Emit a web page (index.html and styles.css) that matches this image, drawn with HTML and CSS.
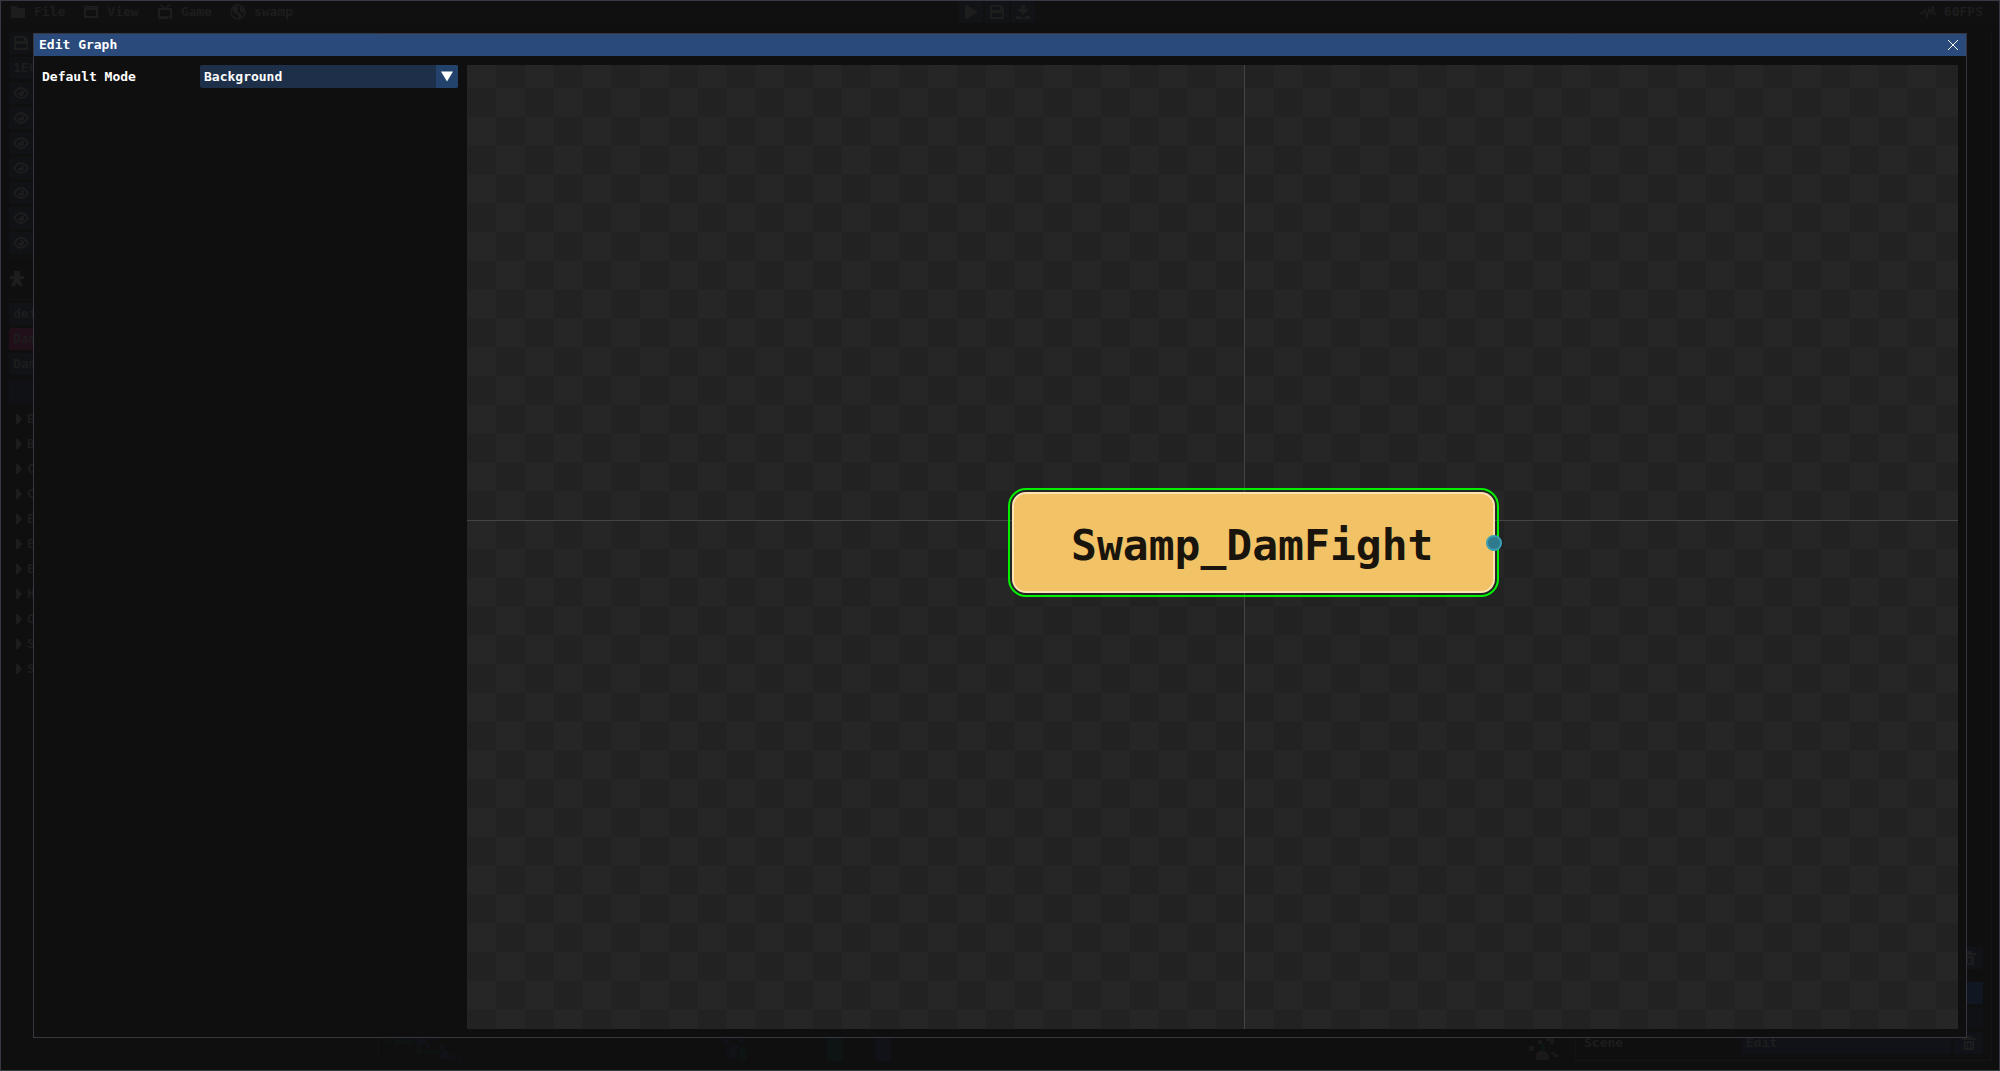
FILE: index.html
```html
<!DOCTYPE html>
<html lang="en">
<head>
    <meta charset="UTF-8">
    <meta name="viewport" content="width=device-width, initial-scale=1.0">
    <title>Edit Graph</title>
    <link rel="stylesheet" href="styles.css">
</head>
<body>
    <!-- Shared icons -->
    <svg class="sprite" aria-hidden="true">
        <symbol id="eye" viewBox="0 0 16 16">
            <path d="M1 8Q8-2 15 8Q8 18 1 8Z" fill="none" stroke="currentColor" stroke-width="2"/>
            <path d="M8 5v3H5a3 3 0 1 0 3-3z"/>
        </symbol>
        <symbol id="save" viewBox="0 0 16 16">
            <path d="M1 1h11l3 3v11H1zM3 3v3h8V3zM3 9v4h10V9z" fill-rule="evenodd"/>
        </symbol>
        <symbol id="trash" viewBox="0 0 16 16">
            <path d="M5 1h6v2h4v2H1V3h4zM3 6h10v9H3zM5 8v5h1V8zM7 8v5h2V8zM10 8v5h1V8z" fill-rule="evenodd"/>
        </symbol>
        <symbol id="arrow" viewBox="0 0 8 10">
            <path d="M1 0h2l4 5-4 5H1z"/>
        </symbol>
    </svg>

    <!-- Editor behind the modal -->
    <div class="editor" inert>
        <header class="menu-bar">
            <nav class="menus">
                <button class="menu">
                    <svg class="icon" viewBox="0 0 16 16"><path d="M1 2h5l2 2h7v10H1z"/></svg>File
                </button>
                <button class="menu">
                    <svg class="icon" viewBox="0 0 16 16"><path d="M1 2h14v12H1zM3 6v6h10V6zM3 3v1h1V3zM6 3v1h1V3z" fill-rule="evenodd"/></svg>View
                </button>
                <button class="menu">
                    <svg class="icon" viewBox="0 0 16 16"><path d="M4 0l4 4 4-4 1 1-3 3h5v11H1V4h5L3 1zM3 6v6h10V6zM11 13v1h2v-1z" fill-rule="evenodd"/></svg>Game
                </button>
                <button class="menu">
                    <svg class="icon" viewBox="0 0 16 16"><circle cx="8" cy="8" r="7" fill="none" stroke="currentColor" stroke-width="1.5"/><path d="M2 5l4-3 3 2-2 3 3 2 2 4-3 1-2-4-3-1zM10 2l4 4-1 4-3-3z"/></svg>swamp
                </button>
            </nav>
            <div class="tools">
                <button class="tool" aria-label="Play"><svg class="icon" viewBox="0 0 16 16"><path d="M2 0l13 8-13 8z"/></svg></button>
                <button class="tool" aria-label="Save"><svg class="icon"><use href="#save"/></svg></button>
                <button class="tool" aria-label="Download"><svg class="icon" viewBox="0 0 16 16"><path d="M6 1h4v4h4l-6 6-6-6h4zM1 12h4l3 2 3-2h4v3H1z"/></svg></button>
            </div>
            <div class="fps">
                <svg class="icon" viewBox="0 0 16 16"><path d="M0 9h3l2-3 2 7 2-8 2 4 2-7 1 8h2" fill="none" stroke="currentColor" stroke-width="1.5"/></svg>60FPS
            </div>
        </header>

        <div class="workspace">
            <aside class="outliner">
                <div class="row"><svg class="icon"><use href="#save"/></svg></div>
                <div class="row">1E0</div>
                <div class="row"><svg class="icon"><use href="#eye"/></svg></div>
                <div class="row"><svg class="icon"><use href="#eye"/></svg></div>
                <div class="row"><svg class="icon"><use href="#eye"/></svg></div>
                <div class="row"><svg class="icon"><use href="#eye"/></svg></div>
                <div class="row"><svg class="icon"><use href="#eye"/></svg></div>
                <div class="row"><svg class="icon"><use href="#eye"/></svg></div>
                <div class="row"><svg class="icon"><use href="#eye"/></svg></div>
                <div class="actor">
                    <svg class="icon" viewBox="0 0 16 16"><path d="M5 0h6v5h4v3h-4l1 3 2 3-3 2-3-4-3 4-3-2 2-3 1-3H1V5h4z"/></svg>
                </div>
                <div class="row">def</div>
                <div class="row selected">Dam</div>
                <div class="row">Dam</div>
                <div class="row empty"></div>
                <ul class="tree">
                    <li><svg class="arrow"><use href="#arrow"/></svg>B</li>
                    <li><svg class="arrow"><use href="#arrow"/></svg>B</li>
                    <li><svg class="arrow"><use href="#arrow"/></svg>C</li>
                    <li><svg class="arrow"><use href="#arrow"/></svg>C</li>
                    <li><svg class="arrow"><use href="#arrow"/></svg>E</li>
                    <li><svg class="arrow"><use href="#arrow"/></svg>E</li>
                    <li><svg class="arrow"><use href="#arrow"/></svg>E</li>
                    <li><svg class="arrow"><use href="#arrow"/></svg>H</li>
                    <li><svg class="arrow"><use href="#arrow"/></svg>O</li>
                    <li><svg class="arrow"><use href="#arrow"/></svg>S</li>
                    <li><svg class="arrow"><use href="#arrow"/></svg>S</li>
                </ul>
            </aside>

            <!-- Bottom edge of the map view -->
            <div class="map">
                <svg class="map-strip" viewBox="0 0 1200 26" preserveAspectRatio="none" aria-hidden="true">
                    <g fill="#0e1413">
                        <path d="M9 4h3v5H9zM15 4h20v5H15zM38 14h5v5h-5zM46 15h14v4H46zM361 12h8v13h-8zM449 0h17v26h-17z"/>
                    </g>
                    <g fill="#101217">
                        <path d="M36 0h7v4h5v5h4v4h-5V9h-5v5h-4V8h-2zM48 0h8v6h-4V3h-4zM60 10h5v4h-5zM62 16h8v4h6v4H60v-4h2zM80 22h4v3h-4zM346 4h4v5h-4zM354 0h5v4h-5zM352 10h8v13h-8v-5h-5v-4h5zM361 4h5v4h-5zM498 0h16v26h-16z"/>
                    </g>
                    <g fill="#191918">
                        <path d="M1163 5h4v4h-4zM1171 2h8v7h-4V6h-4zM1154 11h5v5h-5zM1176 17h4v2h3v3h-5v-3h-2zM1163 16h7l4 4v5h-13v-7h2z"/>
                    </g>
                    <path d="M1166 9h4v7h-4z" fill="#0e1615"/>
                </svg>
            </div>

            <aside class="inspector">
                <div class="field end">
                    <button class="delete" aria-label="Delete"><svg class="icon"><use href="#trash"/></svg></button>
                </div>
                <div class="active-row"></div>
                <div class="row empty"></div>
                <div class="field">
                    <label for="scene">Scene</label>
                    <input id="scene" type="text" value="Edit">
                    <button class="delete" aria-label="Delete scene"><svg class="icon"><use href="#trash"/></svg></button>
                </div>
            </aside>
        </div>
    </div>

    <!-- Modal -->
    <div class="modal" role="dialog" aria-labelledby="modal-title">
        <div class="title-bar">
            <h1 id="modal-title">Edit Graph</h1>
            <button class="close" aria-label="Close">
                <svg viewBox="0 0 12 12"><path d="M1 1l10 10M11 1L1 11" stroke="currentColor"/></svg>
            </button>
        </div>
        <div class="modal-body">
            <form class="settings">
                <label for="mode">Default Mode</label>
                <div class="select">
                    <select id="mode">
                        <option>Background</option>
                    </select>
                    <svg class="select-arrow" viewBox="0 0 22 22" aria-hidden="true"><path d="M5 6h12l-6 10z"/></svg>
                </div>
            </form>
            <div class="graph">
                <!-- Checkerboard and axes, zoomed to 90% around the origin -->
                <svg class="grid" aria-hidden="true">
                    <defs>
                        <pattern id="checker" width="64" height="64" patternUnits="userSpaceOnUse" patternTransform="translate(778 455) scale(0.9)">
                            <path d="M0 0h64v64H0z" fill="#222"/>
                            <path d="M32 0h32v32H32zM0 32h32v32H0z" fill="#262626"/>
                        </pattern>
                    </defs>
                    <rect width="100%" height="100%" fill="url(#checker)"/>
                    <rect x="777" width="1" height="100%" fill="#444"/>
                    <rect y="455" width="100%" height="1" fill="#444"/>
                </svg>
                <div class="node">
                    Swamp_DamFight
                    <span class="port"></span>
                </div>
            </div>
        </div>
    </div>
</body>
</html>
```

FILE: styles.css
```css
* {
    margin: 0;
    padding: 0;
    box-sizing: border-box;
}

body {
    font: bold 13px/22px 'DejaVu Sans Mono', monospace;
    background: #0f0f0f;
    color: #fff;
    height: 100vh;
    overflow: hidden;
}

button,
input,
select {
    font: inherit;
    color: inherit;
    border: none;
    background: none;
}

ul {
    list-style: none;
}

.sprite {
    display: none;
}

.icon {
    width: 16px;
    height: 16px;
    fill: currentColor;
    flex: none;
}

/* Editor (dimmed) */
.editor {
    height: 100%;
    display: flex;
    flex-direction: column;
    border: 1px solid #393943;
    color: #1d1d1d;
}

.menu-bar {
    display: grid;
    grid-template-columns: 1fr auto 1fr;
    height: 22px;
    padding: 0 16px 0 9px;
    background: #101010;
}

.menus {
    display: flex;
    gap: 18px;
}

.menu,
.fps {
    display: flex;
    align-items: center;
    gap: 8px;
}

.fps {
    justify-content: flex-end;
}

.tools {
    display: flex;
    gap: 2px;
}

.tool {
    display: flex;
    align-items: center;
    justify-content: center;
    width: 24px;
    background: #111317;
}

.workspace {
    flex: 1;
    display: flex;
    min-height: 0;
    padding: 9px 7px 9px 8px;
}

/* Left panel */
.outliner {
    width: 369px;
    display: flex;
    flex-direction: column;
    gap: 3px;
}

.row {
    display: flex;
    align-items: center;
    height: 22px;
    padding: 0 4px;
    background: #101216;
    border-radius: 2px;
}

.row.selected {
    background: #210f19;
}

.row.empty {
    background: #101114;
}

.actor {
    display: flex;
    align-items: center;
    height: 43px;
    border-top: 1px solid #121212;
    border-bottom: 1px solid #121212;
}

.outliner .row.empty {
    margin-top: 3px;
}

.tree {
    padding-left: 6px;
}

.tree li {
    display: flex;
    align-items: center;
    gap: 4px;
    height: 25px;
}

.arrow {
    width: 8px;
    height: 10px;
    fill: currentColor;
}

/* Map */
.map {
    flex: 1;
    display: flex;
    align-items: flex-end;
    border-left: 1px solid #131313;
}

.map-strip {
    width: 100%;
    height: 26px;
}

/* Right panel */
.inspector {
    width: 417px;
    display: flex;
    flex-direction: column;
    justify-content: flex-end;
    gap: 3px;
    padding: 0 8px 6px;
    border: 1px solid #121514;
    border-top: none;
}

.field {
    display: grid;
    grid-template-columns: 155px 1fr 29px;
    gap: 3px;
}

.field.end {
    grid-template-columns: 29px;
    grid-auto-rows: 22px;
    justify-content: end;
    margin-bottom: 10px;
}

.field input {
    width: 100%;
    padding: 0 4px;
    background: #101217;
}

.delete {
    display: flex;
    align-items: center;
    justify-content: center;
    background: #101217;
}

.active-row {
    height: 22px;
    background: #101722;
}

/* Modal */
.modal {
    position: fixed;
    inset: 33px;
    display: flex;
    flex-direction: column;
    background: #0f0f0f;
    border: 1px solid #37373f;
}

.title-bar {
    display: flex;
    align-items: center;
    justify-content: space-between;
    height: 22px;
    padding: 0 6px 0 5px;
    background: #294a7a;
}

.title-bar h1 {
    font-size: 13px;
}

.close {
    display: flex;
    padding: 1px;
    cursor: pointer;
}

.close svg {
    width: 12px;
    height: 12px;
}

.modal-body {
    flex: 1;
    display: flex;
    gap: 9px;
    min-height: 0;
    padding: 9px 8px 8px;
}

.settings {
    display: grid;
    grid-template-columns: 150px 1fr;
    align-items: center;
    align-content: start;
    gap: 8px;
    width: 416px;
}

.settings label {
    padding-left: 8px;
    margin-left: -8px;
}

.select {
    position: relative;
}

.select select {
    display: block;
    width: 100%;
    height: 23px;
    padding: 0 26px 0 4px;
    border-radius: 2px;
    background: #1d2f49;
    appearance: none;
}

.select-arrow {
    position: absolute;
    top: 0;
    right: 0;
    width: 22px;
    height: 23px;
    border-radius: 0 2px 2px 0;
    background: #23436c;
    fill: #fff;
    pointer-events: none;
}

/* Graph canvas */
.graph {
    position: relative;
    flex: 1;
    overflow: hidden;
}

.grid {
    display: block;
    width: 100%;
    height: 100%;
}

/* Selected node */
.node {
    position: absolute;
    left: 545px;
    top: 427px;
    padding: 25px 60px 20px 57px;
    border: 2px solid #fbe3b4;
    border-radius: 14px;
    outline: 2px solid #00f000;
    outline-offset: 2px;
    background: #f2c266;
    color: #19150c;
    font-size: 43px;
    line-height: 52px;
}

.port {
    position: absolute;
    top: 41px;
    right: -9px;
    width: 16px;
    height: 16px;
    border: 2px solid #3a9fb5;
    border-radius: 50%;
    background: #2f7a8c;
}
```
